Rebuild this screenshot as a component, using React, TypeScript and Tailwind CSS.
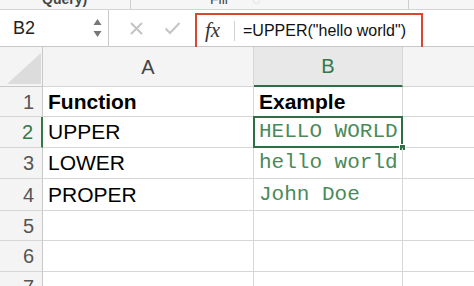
import React from "react";

const sans = { fontFamily: '"Liberation Sans", Arial, sans-serif' };
const mono = { fontFamily: '"Liberation Mono", "Courier New", monospace' };

function Row({ n, a, b, bold, active }: { n: number; a?: string; b?: string; bold?: boolean; active?: boolean }) {
  return (
    <>
      <div
        className={`flex items-center justify-end pr-[8px] bg-[#f4f4f4] border-b border-[#d6d6d6] text-[20px] ${
          active ? "text-[#2f7a48] border-r-2 border-r-[#2f7a48] bg-[#e9e9e9]" : "text-[#555] border-r border-r-[#c8c8c8]"
        }`}
      >
        {n}
      </div>
      <div
        className={`flex items-center pl-[5px] border-b border-r border-[#d6d6d6] text-[21px] text-black ${bold ? "font-bold" : ""}`}
      >
        {a}
      </div>
      <div className="relative flex items-center pl-[5px] border-b border-r border-[#d6d6d6] text-[21px] text-[#4a8a5a]" style={mono}>
        {bold ? (
          <span className="font-bold text-black" style={sans}>
            {b}
          </span>
        ) : (
          b
        )}
        {active && (
          <>
            <div className="absolute left-[-1px] top-[-1px] right-[-1px] bottom-[-1px] border-2 border-[#2f6f45]" />
            <div className="absolute right-[-4px] bottom-[-4px] w-[7px] h-[7px] bg-[#2f6f45] border border-white" />
          </>
        )}
      </div>
      <div className="border-b border-[#d6d6d6]" />
    </>
  );
}

export default function App() {
  return (
    <div className="w-[474px] h-[286px] overflow-hidden bg-white" style={sans}>
      {/* ribbon remnant */}
      <div className="relative h-[10px] bg-[#f6f6f6] border-b border-[#d4d4d4] overflow-hidden">
        <span className="absolute left-[42px] top-[-11px] text-[14px] font-semibold text-[#444]">Query)</span>
        <div className="absolute left-[130px] top-0 h-full w-px bg-[#cfcfcf]" />
        <span className="absolute left-[210px] top-[-11px] text-[14px] text-[#444]">Fill</span>
        <span className="absolute left-[252px] top-[-11px] text-[14px] text-[#bbb]">◌</span>
        <div className="absolute left-[408px] top-0 h-full w-px bg-[#cfcfcf]" />
      </div>
      {/* formula bar */}
      <div className="flex h-[37px] bg-white border-b border-[#c8c8c8]">
        <div className="flex items-center w-[109px] border-r border-[#c8c8c8] pl-[13px] pr-[6px]">
          <span className="text-[18px] text-[#222] flex-1">B2</span>
          <svg width="9" height="20" viewBox="0 0 9 20">
            <path d="M4.5 1 L8.5 7 L0.5 7 Z" fill="#777" />
            <path d="M4.5 19 L8.5 13 L0.5 13 Z" fill="#777" />
          </svg>
        </div>
        <div className="flex items-center w-[86px] pl-[20px] gap-[20px]">
          <svg width="15" height="15" viewBox="0 0 15 15">
            <path d="M2 2 L13 13 M13 2 L2 13" stroke="#c4c4c4" strokeWidth="2" />
          </svg>
          <svg width="17" height="14" viewBox="0 0 17 14">
            <path d="M1.5 7.5 L6 12 L15.5 2" stroke="#c4c4c4" strokeWidth="2" fill="none" />
          </svg>
        </div>
        <div className="flex items-center w-[228px] h-[36px] mt-[3px] border-2 border-[#d9472f] pl-[8px]">
          <span className="text-[21px] italic text-[#333] w-[26px]" style={{ fontFamily: '"Liberation Serif", serif' }}>
            fx
          </span>
          <div className="w-px h-[20px] bg-[#d0d0d0] ml-[3px] mr-[8px]" />
          <span className="text-[16px] text-[#111] whitespace-nowrap">=UPPER("hello world")</span>
        </div>
      </div>
      {/* sheet */}
      <div className="grid grid-cols-[43px_211px_149px_1fr] grid-rows-[40px_30px_31px_31px_32px_30px_31px_31px]">
        <div className="relative bg-[#f4f4f4] border-r border-b border-[#c8c8c8]">
          <svg className="absolute left-[7px] top-[6px]" width="34" height="31" viewBox="0 0 34 31">
            <path d="M34 0 L34 31 L0 31 Z" fill="#dcdcdc" />
          </svg>
        </div>
        <div className="flex items-center justify-center bg-[#f4f4f4] border-r border-b border-[#d6d6d6] text-[20px] text-[#444]">A</div>
        <div className="flex items-center justify-center bg-[#e8e8e8] border-r border-[#d6d6d6] border-b-2 border-b-[#2f6f45] text-[20px] text-[#2f7a48]">
          B
        </div>
        <div className="bg-[#f4f4f4] border-b border-[#d6d6d6]" />
        <Row n={1} a="Function" b="Example" bold />
        <Row n={2} a="UPPER" b="HELLO WORLD" active />
        <Row n={3} a="LOWER" b="hello world" />
        <Row n={4} a="PROPER" b="John Doe" />
        <Row n={5} />
        <Row n={6} />
        <Row n={7} />
      </div>
    </div>
  );
}
